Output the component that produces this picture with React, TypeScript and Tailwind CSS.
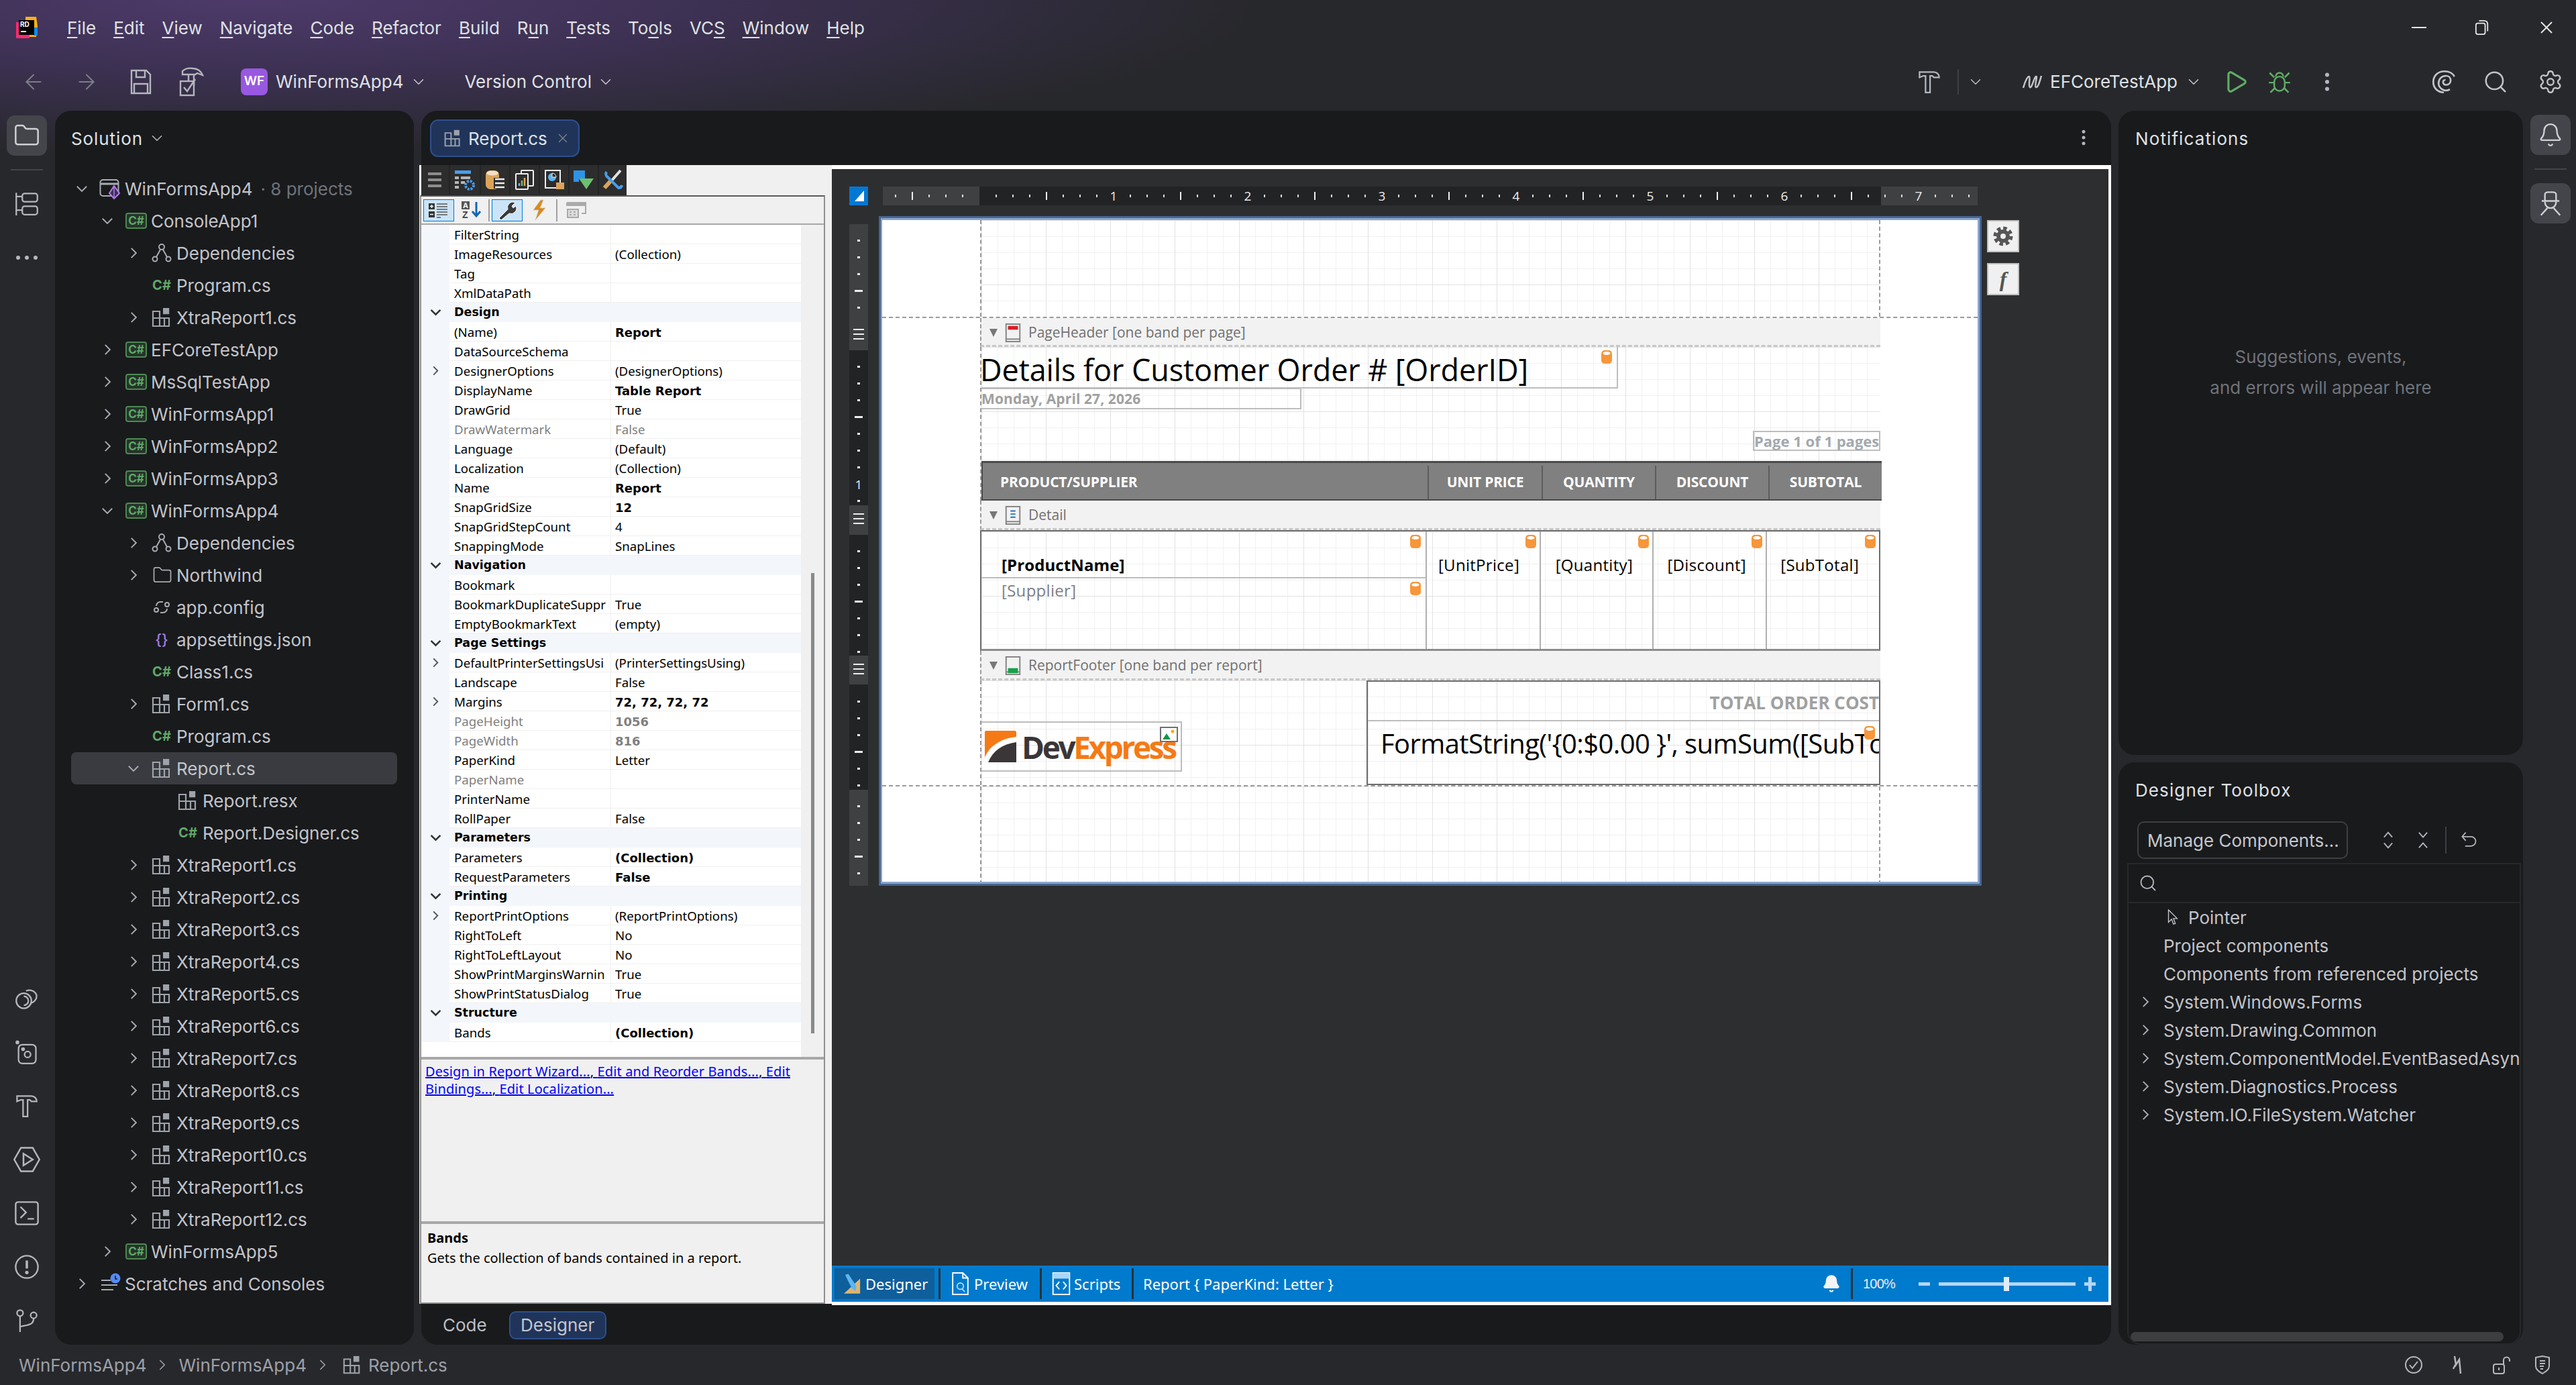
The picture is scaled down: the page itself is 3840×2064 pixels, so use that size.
import {
  ArrowLeft, ArrowRight, Bell, ChevronDown, ChevronRight, EllipsisVertical, Folder, Play, Search, Settings, X,
} from "lucide-react"

const ui = "font-['Inter',sans-serif]"
const tahoma = "font-['Noto_Sans',sans-serif]"
const segoe = "font-['Open_Sans',sans-serif]"

const menus: [string, string, string][] = [
  ["", "F", "ile"], ["", "E", "dit"], ["", "V", "iew"], ["", "N", "avigate"], ["", "C", "ode"], ["", "R", "efactor"],
  ["", "B", "uild"], ["R", "u", "n"], ["", "T", "ests"], ["To", "o", "ls"], ["VC", "S", ""], ["", "W", "indow"], ["", "H", "elp"],
]

function Chev({ open, className = "" }: { open?: boolean; className?: string }) {
  return (
    <svg viewBox="0 0 20 20" className={`w-[26px] h-[26px] ${className}`} fill="none" stroke="#a8abb2" strokeWidth="1.5">
      {open ? <path d="M4.5 7.5l5.5 5.5 5.5-5.5" /> : <path d="M7.5 4.5l5.5 5.5-5.5 5.5" />}
    </svg>
  )
}

function ReportIcon({ className = "w-[32px] h-[32px]" }: { className?: string }) {
  return (
    <svg viewBox="0 0 16 16" className={className} fill="none" stroke="#9ea3ab" strokeWidth="1.1">
      <path d="M1.5 3.5h5v11h-5zM6.5 8.5h7v6h-7zM1.5 8.5h5M10 8.5v6" />
      <rect x="9" y="1" width="4.6" height="4.6" fill="#9ea3ab" stroke="none" />
    </svg>
  )
}

function HammerIcon({ className }: { className: string }) {
  return (
    <svg viewBox="0 0 32 32" className={className} fill="none" stroke="#b4b7bd" strokeWidth="2">
      <path d="M3 3h19c4 0 7 3 7 7h-7l-2-2h-3v22h-6V8H8L3 10z" />
    </svg>
  )
}

function CsBadge() {
  return (
    <span className="w-[32px] h-[24px] rounded-[4px] border-2 border-[#4c8a52] bg-[#25342a] text-[#5fa866] text-[17px] font-bold flex items-center justify-center leading-none">
      C#
    </span>
  )
}

function CsFile() {
  return <span className="w-[32px] text-center text-[#5fa866] text-[20px] font-bold leading-none">C#</span>
}

function SolutionIcon() {
  return (
    <svg viewBox="0 0 32 32" className="w-[32px] h-[32px]" fill="none">
      <rect x="1.5" y="3" width="27" height="24" rx="4" stroke="#a8abb2" strokeWidth="2" />
      <path d="M2 9h26" stroke="#a8abb2" strokeWidth="3" />
      <path d="M22 12l8 11-8 8-7-8z" fill="#3d2f57" stroke="#b07ee8" strokeWidth="2" />
      <path d="M22 14v15" stroke="#b07ee8" strokeWidth="1.5" />
    </svg>
  )
}

function DepsIcon() {
  return (
    <svg viewBox="0 0 32 32" className="w-[32px] h-[32px]" fill="none" stroke="#a8abb2" strokeWidth="2">
      <circle cx="16" cy="7" r="4" />
      <circle cx="6" cy="25" r="3.5" />
      <circle cx="26" cy="25" r="3.5" />
      <path d="M14 11L8 22M18 11l6 11" />
    </svg>
  )
}

function ScratchIcon() {
  return (
    <svg viewBox="0 0 32 32" className="w-[32px] h-[32px]" fill="none">
      <path d="M3 11h14M3 18h24M3 25h18" stroke="#a8abb2" strokeWidth="2" />
      <circle cx="24" cy="8" r="7.5" fill="#548af7" />
      <path d="M24 4v5h3" stroke="#191a1c" strokeWidth="1.5" />
    </svg>
  )
}

function ConfigIcon() {
  return (
    <svg viewBox="0 0 32 32" className="w-[32px] h-[32px]" fill="none" stroke="#a8abb2" strokeWidth="2">
      <path d="M8 14a6 6 0 0 1 6-6h4M24 18a6 6 0 0 1-6 6h-4" />
      <circle cx="8" cy="20" r="3" />
      <circle cx="24" cy="12" r="3" />
    </svg>
  )
}

type TreeRow = { label: string; level: 0 | 1 | 2 | 3; chev?: "open" | "closed"; icon: string; note?: string; sel?: boolean }

const xtra: TreeRow[] = ["1", "2", "3", "4", "5", "6", "7", "8", "9", "10", "11", "12"].map((n) => ({
  label: `XtraReport${n}.cs`, level: 2, chev: "closed", icon: "report",
}))

const tree: TreeRow[] = [
  { label: "WinFormsApp4", level: 0, chev: "open", icon: "sln", note: "· 8 projects" },
  { label: "ConsoleApp1", level: 1, chev: "open", icon: "cs" },
  { label: "Dependencies", level: 2, chev: "closed", icon: "deps" },
  { label: "Program.cs", level: 2, icon: "file" },
  { label: "XtraReport1.cs", level: 2, chev: "closed", icon: "report" },
  { label: "EFCoreTestApp", level: 1, chev: "closed", icon: "cs" },
  { label: "MsSqlTestApp", level: 1, chev: "closed", icon: "cs" },
  { label: "WinFormsApp1", level: 1, chev: "closed", icon: "cs" },
  { label: "WinFormsApp2", level: 1, chev: "closed", icon: "cs" },
  { label: "WinFormsApp3", level: 1, chev: "closed", icon: "cs" },
  { label: "WinFormsApp4", level: 1, chev: "open", icon: "cs" },
  { label: "Dependencies", level: 2, chev: "closed", icon: "deps" },
  { label: "Northwind", level: 2, chev: "closed", icon: "folder" },
  { label: "app.config", level: 2, icon: "config" },
  { label: "appsettings.json", level: 2, icon: "json" },
  { label: "Class1.cs", level: 2, icon: "file" },
  { label: "Form1.cs", level: 2, chev: "closed", icon: "report" },
  { label: "Program.cs", level: 2, icon: "file" },
  { label: "Report.cs", level: 2, chev: "open", icon: "report", sel: true },
  { label: "Report.resx", level: 3, icon: "report" },
  { label: "Report.Designer.cs", level: 3, icon: "file" },
  ...xtra,
  { label: "WinFormsApp5", level: 1, chev: "closed", icon: "cs" },
  { label: "Scratches and Consoles", level: 0, chev: "closed", icon: "scratch" },
]

const levelPad = ["pl-[3px]", "pl-[41px]", "pl-[80px]", "pl-[119px]"]

function TreeIcon({ kind }: { kind: string }) {
  if (kind === "sln") return <SolutionIcon />
  if (kind === "cs") return <CsBadge />
  if (kind === "file") return <CsFile />
  if (kind === "deps") return <DepsIcon />
  if (kind === "folder") return <Folder className="w-[30px] h-[30px]" color="#a8abb2" strokeWidth={1.4} />
  if (kind === "config") return <ConfigIcon />
  if (kind === "scratch") return <ScratchIcon />
  if (kind === "json") return <span className="w-[32px] text-center text-[#a57ee0] text-[22px] font-medium leading-none">{"{}"}</span>
  return <ReportIcon />
}

function ProjectTree() {
  return (
    <div className="pl-[24px] w-[510px]">
      {tree.map((row, i) => (
        <div
          key={i}
          className={`flex items-center h-[48px] whitespace-nowrap rounded-[8px] ${levelPad[row.level]} ${row.sel ? "bg-[#393b40]" : ""}`}
        >
          <span className="w-[26px] flex justify-center">{row.chev && <Chev open={row.chev === "open"} />}</span>
          <span className={`${row.level === 1 ? "w-[52px]" : "w-[51px]"} pr-[6px] flex justify-end`}>
            <TreeIcon kind={row.icon} />
          </span>
          <span className="text-[#c2c4ca]">{row.label}</span>
          {row.note && <span className="ml-[12px] text-[#6f737a]">{row.note}</span>}
        </div>
      ))}
    </div>
  )
}

function LeftStripe() {
  const stroke = "#b4b7bd"
  return (
    <div className="w-[82px] h-full flex flex-col justify-between items-center pb-[6px] pr-[2px]">
      <div className="flex flex-col items-center pt-[7px]">
        <div className="w-[60px] h-[60px] rounded-[12px] bg-[#43454a] flex items-center justify-center">
          <Folder className="w-[40px] h-[40px]" color="#ced0d6" strokeWidth={1.5} />
        </div>
        <div className="w-[48px] h-[2px] bg-[#43454a] my-[20px]" />
        <div className="w-[60px] h-[60px] flex items-center justify-center">
          <svg viewBox="0 0 32 32" className="w-[36px] h-[36px]" fill="none" stroke={stroke} strokeWidth="2">
            <path d="M2 1v30M2 6h8M2 24h8" />
            <rect x="10" y="2" width="20" height="11" rx="3" />
            <rect x="10" y="19" width="20" height="11" rx="3" />
          </svg>
        </div>
        <div className="w-[60px] h-[60px] mt-[20px] flex items-center justify-center gap-[7px]">
          <span className="w-[6px] h-[6px] rounded-full bg-[#b4b7bd]" />
          <span className="w-[6px] h-[6px] rounded-full bg-[#b4b7bd]" />
          <span className="w-[6px] h-[6px] rounded-full bg-[#b4b7bd]" />
        </div>
      </div>
      <div className="flex flex-col gap-[20px]">
        <div className="w-[60px] h-[60px] flex items-center justify-center">
          <svg viewBox="0 0 32 32" className="w-[36px] h-[36px]" fill="none" stroke={stroke} strokeWidth="2">
            <circle cx="12" cy="19" r="10" />
            <path d="M12 13a6 6 0 0 1 0 12" />
            <path d="M15 6a10 10 0 0 1 14 6 10 10 0 0 1-7 10" />
          </svg>
        </div>
        <div className="w-[60px] h-[60px] flex items-center justify-center">
          <svg viewBox="0 0 32 32" className="w-[36px] h-[36px]" fill="none" stroke={stroke} strokeWidth="2">
            <circle cx="3.5" cy="3" r="1.5" fill={stroke} />
            <rect x="5" y="6" width="23" height="25" rx="5" />
            <circle cx="17" cy="19" r="4" />
            <circle cx="11" cy="12" r="1.5" fill={stroke} />
          </svg>
        </div>
        <div className="w-[60px] h-[60px] flex items-center justify-center">
          <HammerIcon className="w-[36px] h-[36px]" />
        </div>
        <div className="w-[60px] h-[60px] flex items-center justify-center">
          <svg viewBox="0 0 32 32" className="w-[40px] h-[40px]" fill="none" stroke={stroke} strokeWidth="2">
            <path d="M9 2h14l8 14-8 14H9L1 16z" />
            <path d="M12 9l11 7-11 7z" />
          </svg>
        </div>
        <div className="w-[60px] h-[60px] flex items-center justify-center">
          <svg viewBox="0 0 32 32" className="w-[38px] h-[38px]" fill="none" stroke={stroke} strokeWidth="2">
            <rect x="2" y="2" width="28" height="28" rx="3" />
            <path d="M8 8l7 7-7 7M17 23h8" />
          </svg>
        </div>
        <div className="w-[60px] h-[60px] flex items-center justify-center">
          <svg viewBox="0 0 32 32" className="w-[38px] h-[38px]" fill="none" stroke={stroke} strokeWidth="2">
            <circle cx="16" cy="16" r="14" />
            <path d="M16 8v10" strokeWidth="3" />
            <circle cx="16" cy="23" r="1.2" fill={stroke} />
          </svg>
        </div>
        <div className="w-[60px] h-[60px] flex items-center justify-center">
          <svg viewBox="0 0 32 32" className="w-[36px] h-[36px]" fill="none" stroke={stroke} strokeWidth="2">
            <circle cx="7" cy="6" r="4" />
            <circle cx="25" cy="9" r="4" />
            <path d="M7 10v21M25 13c0 8-6 9-18 11" />
          </svg>
        </div>
      </div>
    </div>
  )
}

type Prop = { n: string; v?: string; b?: boolean; dim?: boolean; exp?: boolean; cat?: boolean }

const props: Prop[] = [
  { n: "FilterString" },
  { n: "ImageResources", v: "(Collection)" },
  { n: "Tag" },
  { n: "XmlDataPath" },
  { n: "Design", cat: true },
  { n: "(Name)", v: "Report", b: true },
  { n: "DataSourceSchema" },
  { n: "DesignerOptions", v: "(DesignerOptions)", exp: true },
  { n: "DisplayName", v: "Table Report", b: true },
  { n: "DrawGrid", v: "True" },
  { n: "DrawWatermark", v: "False", dim: true },
  { n: "Language", v: "(Default)" },
  { n: "Localization", v: "(Collection)" },
  { n: "Name", v: "Report", b: true },
  { n: "SnapGridSize", v: "12", b: true },
  { n: "SnapGridStepCount", v: "4" },
  { n: "SnappingMode", v: "SnapLines" },
  { n: "Navigation", cat: true },
  { n: "Bookmark" },
  { n: "BookmarkDuplicateSuppr", v: "True" },
  { n: "EmptyBookmarkText", v: "(empty)" },
  { n: "Page Settings", cat: true },
  { n: "DefaultPrinterSettingsUsi", v: "(PrinterSettingsUsing)", exp: true },
  { n: "Landscape", v: "False" },
  { n: "Margins", v: "72, 72, 72, 72", b: true, exp: true },
  { n: "PageHeight", v: "1056", b: true, dim: true },
  { n: "PageWidth", v: "816", b: true, dim: true },
  { n: "PaperKind", v: "Letter" },
  { n: "PaperName", dim: true },
  { n: "PrinterName" },
  { n: "RollPaper", v: "False" },
  { n: "Parameters", cat: true },
  { n: "Parameters", v: "(Collection)", b: true },
  { n: "RequestParameters", v: "False", b: true },
  { n: "Printing", cat: true },
  { n: "ReportPrintOptions", v: "(ReportPrintOptions)", exp: true },
  { n: "RightToLeft", v: "No" },
  { n: "RightToLeftLayout", v: "No" },
  { n: "ShowPrintMarginsWarnin", v: "True" },
  { n: "ShowPrintStatusDialog", v: "True" },
  { n: "Structure", cat: true },
  { n: "Bands", v: "(Collection)", b: true },
]

function PropertyRow({ p }: { p: Prop }) {
  if (p.cat) {
    return (
      <div className="flex h-[29px] bg-[#f3f6fb] items-center">
        <span className="w-[42px] flex justify-center">
          <svg viewBox="0 0 16 10" className="w-[17px] h-[11px]" fill="none" stroke="#333" strokeWidth="2.4">
            <path d="M1.5 1.5L8 8l6.5-6.5" />
          </svg>
        </span>
        <span className="pl-[7px] font-['DejaVu_Sans',sans-serif] font-bold text-[17.5px] text-black">{p.n}</span>
      </div>
    )
  }
  const color = p.dim ? "text-[#808080]" : "text-black"
  return (
    <div className="flex h-[29px] bg-[#f3f6fb]">
      <span className="w-[42px] flex items-center justify-center">
        {p.exp && (
          <svg viewBox="0 0 10 16" className="w-[11px] h-[15px]" fill="none" stroke="#555" strokeWidth="2">
            <path d="M1.5 1.5L8 8l-6.5 6.5" />
          </svg>
        )}
      </span>
      <div className="w-[241px] bg-white border-b border-[#f0f0f0] border-r pl-[7px] overflow-hidden whitespace-nowrap leading-[29px]">
        <span className={color}>{p.n}</span>
      </div>
      <div
        className={`w-[283px] border-b border-[#f0f0f0] pl-[6px] overflow-hidden whitespace-nowrap leading-[29px] bg-white ${color}`}
      >
        {p.b ? <span className="font-['DejaVu_Sans',sans-serif] font-bold text-[18px]">{p.v}</span> : p.v}
      </div>
    </div>
  )
}

function TabIcon({ i }: { i: number }) {
  const base = "w-[32px] h-[32px]"
  if (i === 0)
    return (
      <svg viewBox="0 0 32 32" className={base} fill="#8d8d8d">
        <rect x="5" y="5" width="20" height="4" />
        <rect x="5" y="14" width="20" height="4" />
        <rect x="5" y="23" width="20" height="4" />
      </svg>
    )
  if (i === 1)
    return (
      <svg viewBox="0 0 32 32" className={base}>
        <rect x="1" y="2" width="24" height="5" fill="#4a9eea" />
        <path d="M1 11h6v4H1zM10 11h14v4H10zM1 18h6v4H1zM10 18h6v4h-6zM1 25h6v4H1z" fill="#b6b6b6" />
        <circle cx="23" cy="24" r="6" fill="none" stroke="#4a9eea" strokeWidth="4" strokeDasharray="3 1.7" />
      </svg>
    )
  if (i === 2)
    return (
      <svg viewBox="0 0 32 32" className={base}>
        <rect x="2" y="2" width="20" height="28" rx="7" fill="#dba35a" />
        <ellipse cx="12" cy="6" rx="9" ry="3.5" fill="#f2e0c2" />
        <rect x="14" y="13" width="17" height="16" fill="#2d2d2d" />
        <path d="M16 15h14M16 21h14M16 27h14" stroke="#eee" strokeWidth="2.5" />
      </svg>
    )
  if (i === 3)
    return (
      <svg viewBox="0 0 32 32" className={base} fill="none" stroke="#eee" strokeWidth="2">
        <rect x="11" y="2" width="18" height="23" rx="1" />
        <rect x="3" y="7" width="18" height="23" rx="1" fill="#2d2d2d" />
        <path d="M8 25v-4" stroke="#5db5f0" strokeWidth="2.5" />
        <path d="M12 25v-8" stroke="#6cbf6c" strokeWidth="2.5" />
        <path d="M16 25V13" stroke="#e5a84f" strokeWidth="2.5" />
      </svg>
    )
  if (i === 4)
    return (
      <svg viewBox="0 0 32 32" className={base}>
        <rect x="3" y="2" width="22" height="26" fill="#2d2d2d" stroke="#eee" strokeWidth="2" />
        <circle cx="13" cy="12" r="6" fill="#5db5f0" />
        <path d="M13 12V6a6 6 0 0 1 6 6z" fill="#2d2d2d" stroke="#eee" />
        <rect x="19" y="20" width="12" height="10" fill="#dba35a" />
      </svg>
    )
  if (i === 5)
    return (
      <svg viewBox="0 0 32 32" className={base}>
        <path d="M1 2h17v12H9v5H1z" fill="#2f93e8" />
        <path d="M9 14h22L20 30z" fill="#6cc06f" />
      </svg>
    )
  return (
    <svg viewBox="0 0 32 32" className={base} fill="none" strokeWidth="4">
      <path d="M27 2L6 26" stroke="#e2e2e2" />
      <path d="M12 18L3 28" stroke="#dba35a" strokeWidth="6" />
      <path d="M6 4a6 6 0 0 0 2 8l16 16a5 5 0 0 0 5-4" stroke="#4a9eea" />
    </svg>
  )
}

const tabWidths = ["w-[41px]", "w-[44px]", "w-[42px]", "w-[42px]", "w-[42px]", "w-[42px]", "w-[41px]"]

function PropertyPane() {
  return (
    <div className={`w-[615px] shrink-0 h-[1697px] flex flex-col bg-[#f0f0f0] ${tahoma} text-[18.7px]`}>
      <div className="h-[45px] flex border-l-[3px] border-white">
        <div className="flex gap-[2px] bg-[#232426]">
          {tabWidths.map((w, i) => (
            <div key={i} className={`${w} bg-[#2d2d2d] flex items-center justify-center h-[44px]`}>
              <TabIcon i={i} />
            </div>
          ))}
        </div>
      </div>
      <div className="flex-1 ml-[1px] mr-[10px] flex flex-col border-x-2 border-t-2 border-b-2 border-[#8f8f8f] border-t-[#5a5a5a] min-h-0">
        <div className="h-[42px] flex items-center pl-[3px] border-b-2 border-[#a8a8a8]">
          <span className="w-[46px] h-[33px] border border-[#0078d4] bg-[#cce4f7] flex items-center justify-center">
            <svg viewBox="0 0 32 24" className="w-[32px] h-[24px]">
              <path d="M1 2h9v9H1zM1 14h9v9H1z" fill="#333" />
              <path d="M3 6.5h5M5.5 4v5M3 18.5h5" stroke="#fff" strokeWidth="1.5" />
              <path d="M13 3h16M13 7h16M13 11h16M13 15h16M13 19h16M13 23h6" stroke="#555" strokeWidth="1.5" />
            </svg>
          </span>
          <span className="w-[46px] h-[33px] ml-[2px] flex items-center justify-center">
            <svg viewBox="0 0 32 28" className="w-[32px] h-[28px]">
              <rect x="2" y="1" width="12" height="12" fill="#555" />
              <text x="4" y="11" fontSize="11" fontWeight="700" fill="#fff" fontFamily="Liberation Sans">A</text>
              <text x="3" y="26" fontSize="14" fontWeight="700" fill="#444" fontFamily="Liberation Sans">Z</text>
              <path d="M24 2v20M18 16l6 7 6-7" stroke="#1666b0" strokeWidth="3" fill="none" />
            </svg>
          </span>
          <span className="w-[2px] h-[33px] bg-[#a0a0a0] ml-[3px]" />
          <span className="w-[46px] h-[33px] ml-[3px] border border-[#0078d4] bg-[#cce4f7] flex items-center justify-center">
            <svg viewBox="0 0 32 32" className="w-[32px] h-[32px]">
              <path d="M4 28l13-13a8 8 0 0 1 11-10l-5 5 2 3 4-3a8 8 0 0 1-10 11L7 31z" fill="#3a3a3a" stroke="#fff" />
            </svg>
          </span>
          <span className="w-[46px] h-[33px] ml-[2px] flex items-center justify-center">
            <svg viewBox="0 0 24 32" className="w-[24px] h-[32px]">
              <path d="M14 1L3 16h8L6 31l15-18h-8l5-12z" fill="#d98a1a" stroke="#c9c9c9" strokeWidth="0.8" />
            </svg>
          </span>
          <span className="w-[2px] h-[33px] bg-[#a0a0a0] ml-[2px]" />
          <span className="w-[46px] h-[33px] ml-[5px] flex items-center justify-center">
            <svg viewBox="0 0 30 24" className="w-[30px] h-[24px]" fill="none" stroke="#aaa" strokeWidth="2">
              <path d="M1 1h28v16h-6" />
              <rect x="0" y="1" width="29" height="5" fill="#aaa" stroke="none" />
              <rect x="2" y="11" width="16" height="12" fill="#ddd" />
              <path d="M5 15h3M11 15h3M5 19h3M11 19h3" />
            </svg>
          </span>
        </div>
        <div className="h-[1240px] flex bg-white overflow-hidden relative">
          <div className="w-[566px] shrink-0">
            {props.map((p, i) => (
              <PropertyRow key={i} p={p} />
            ))}
          </div>
          <div className="flex-1 bg-[#f0f0f0] relative">
            <span className="absolute left-[15px] top-[519px] bottom-[35px] w-[5px] bg-[#8a8a8a]" />
          </div>
        </div>
        <div className="h-[4px] border-t-2 border-[#a8a8a8] border-b-2" />
        <div className="h-[241px] pl-[6px] pt-[5px] text-[20px] text-[#0000ff] underline leading-[26px] tracking-[0.12px]">
          <span>Design in Report Wizard...</span><span className="text-black">, </span>
          <span>Edit and Reorder Bands...</span><span className="text-black">, </span>
          <span>Edit</span>
          <br />
          <span>Bindings...</span><span className="text-black">, </span>
          <span>Edit Localization...</span>
        </div>
        <div className="h-[4px] border-t-2 border-b-2 border-[#a8a8a8]" />
        <div className="flex-1 pl-[9px] pt-[6px] text-[20px] text-black leading-[30px]">
          <div className="font-bold">Bands</div>
          <div>Gets the collection of bands contained in a report.</div>
        </div>
      </div>
    </div>
  )
}

const rulerTicks = Array.from({ length: 65 }, (_, i) => i - 5).filter((k) => k !== 0)

function HRuler() {
  return (
    <svg width="1632" height="28" className="block">
      <rect width="1632" height="28" fill="#222325" />
      <rect width="144" height="28" fill="#3f4042" />
      <rect x="1488" width="144" height="28" fill="#3f4042" />
      {rulerTicks.map((k) => {
        const x = 144 + k * 25
        if (k > 0 && k % 8 === 0)
          return (
            <text key={k} x={x} y="21" textAnchor="middle" fontSize="19" fill="#eee" fontFamily="Open Sans">
              {k / 8}
            </text>
          )
        if (k % 4 === 0) return <rect key={k} x={x - 1} y="8" width="2" height="12" fill="#eee" />
        return <rect key={k} x={x - 1} y="12" width="2" height="4" fill="#ddd" />
      })}
    </svg>
  )
}

const vDots = [358, 383, 408, 458, 546, 571, 596, 646, 671, 696, 746, 821, 846, 871, 921, 946, 971, 1045, 1070, 1095, 1145, 1170, 1201, 1226, 1251, 1301]
const vLong = [433, 621, 896, 1120, 1276]
const vHandles = [500, 775, 999]

function VRuler() {
  return (
    <svg width="28" height="986" className="block">
      <rect width="28" height="986" fill="#222325" />
      <rect width="28" height="188" fill="#3f4042" />
      <rect y="419" width="28" height="44" fill="#3f4042" />
      <rect y="643" width="28" height="43" fill="#3f4042" />
      <rect y="843" width="28" height="143" fill="#3f4042" />
      {vDots.map((y) => (
        <rect key={y} x="12" y={y - 335} width="4" height="3" fill="#eee" />
      ))}
      {vLong.map((y) => (
        <rect key={y} x="8" y={y - 335} width="12" height="3" fill="#eee" />
      ))}
      {vHandles.map((y) => (
        <path key={y} d={`M6 ${y - 343}h16M6 ${y - 336}h16M6 ${y - 329}h16`} stroke="#eee" strokeWidth="2" />
      ))}
      <text x="14" y="395" textAnchor="middle" fontSize="19" fill="#eee" fontFamily="Open Sans">
        1
      </text>
    </svg>
  )
}

const gridBg =
  "bg-[linear-gradient(to_right,#e2e2e2_1px,transparent_1px),linear-gradient(to_bottom,#e2e2e2_1px,transparent_1px),linear-gradient(to_right,#f1f1f1_1px,transparent_1px),linear-gradient(to_bottom,#f1f1f1_1px,transparent_1px)] bg-[size:96px_96px,96px_96px,24px_24px,24px_24px]"

function Db({ className }: { className: string }) {
  return (
    <svg viewBox="0 0 16 20" className={`absolute w-[16px] h-[20px] ${className}`}>
      <rect width="16" height="20" rx="5" fill="#f7963a" />
      <ellipse cx="8" cy="4.5" rx="5.5" ry="2.5" fill="#fff" />
    </svg>
  )
}

function BandStrip({ title, icon, className }: { title: string; icon: "head" | "detail" | "foot"; className: string }) {
  return (
    <div className={`flex ${className}`}>
      <div className="w-[146px]" />
      <div className="w-[1342px] bg-[#f2f2f2] border-l-2 border-dashed border-[#9a9a9a] border-b-[3px] border-b-[#c8c8c8] border-b-solid pt-[3px] flex items-center pl-[12px]">
        <span className="border-x-[6px] border-x-transparent border-t-[12px] border-t-[#777] mr-[11px]" />
        <svg viewBox="0 0 24 30" className="w-[24px] h-[28px] mr-[11px]" fill="none">
          <rect x="1" y="1" width="22" height="28" stroke="#808080" strokeWidth="2" />
          <path d="M1 25h22" stroke="#808080" strokeWidth="2" />
          {icon === "head" && <rect x="4" y="4" width="16" height="6" fill="#d81e26" />}
          {icon === "detail" && <path d="M8 8h8M8 13h8M8 18h8" stroke="#2a6fbe" strokeWidth="2" />}
          {icon === "foot" && <rect x="4" y="19" width="16" height="8" fill="#18a04a" />}
        </svg>
        <span className={`${segoe} text-[21px] text-[#707070]`}>{title}</span>
      </div>
      <div className="flex-1" />
    </div>
  )
}

function DashedCell({ className = "" }: { className?: string }) {
  return <div className={`w-[1342px] border-x-2 border-dashed border-[#9a9a9a] ${gridBg} ${className}`} />
}

function ReportPage() {
  const heads = [["UNIT PRICE", "w-[170px]"], ["QUANTITY", "w-[169px]"], ["DISCOUNT", "w-[169px]"], ["SUBTOTAL", "w-[167px]"]]
  const cells = [
    ["[UnitPrice]", "w-[170px] pl-[17px]"],
    ["[Quantity]", "w-[169px] pl-[22px]"],
    ["[Discount]", "w-[169px] pl-[20px]"],
    ["[SubTotal]", "w-[167px] pl-[20px]"],
  ]
  return (
    <div className="w-[1644px] h-[998px] border-[3px] border-[#47658f] shrink-0">
      <div className="w-full h-full border-[3px] border-[#8aa6cd] border-l-[2px] bg-white flex flex-col overflow-hidden">
        <div className="h-[144px] flex shrink-0">
          <div className="w-[146px]" />
          <DashedCell />
        </div>
        <div className="border-t-2 border-dashed border-[#9a9a9a]" />
        <BandStrip title="PageHeader [one band per page]" icon="head" className="h-[43px] shrink-0" />
        {/* page header band */}
        <div className="flex h-[229px] shrink-0">
          <div className="w-[146px]" />
          <div className={`w-[1342px] relative ${gridBg} border-l-2 border-dashed border-[#9a9a9a]`}>
            <div className="absolute left-0 top-0 w-[949px] h-[62px] border-2 border-t-0 border-l-0 border-[#bdbdbd]">
              <span className={`${segoe} absolute left-[-2px] top-[3px] text-[45px] leading-[62px] tracking-[-0.1px] whitespace-nowrap text-black`}>
                Details for Customer Order # [OrderID]
              </span>
              <Db className="right-[7px] top-[5px]" />
            </div>
            <div className="absolute left-0 top-[61px] w-[477px] h-[32px] border-2 border-l-0 border-[#bdbdbd]">
              <span className={`${segoe} font-bold text-[21px] leading-[28px] tracking-[0.1px] text-[#a0a0a0] whitespace-nowrap block`}>
                Monday, April 27, 2026
              </span>
            </div>
            <div className="absolute right-0 top-[125px] w-[190px] h-[30px] border-2 border-[#bdbdbd] text-right">
              <span className={`${segoe} font-bold text-[22px] leading-[26px] text-[#a2a9ae] whitespace-nowrap block`}>
                Page 1 of 1 pages
              </span>
            </div>
            <div className={`absolute left-0 top-[170px] w-[1342px] h-[59px] bg-[#808080] border-t-[3px] border-b-[2px] border-[#4a4a4a] border-l-2 pt-[4px] flex text-white ${segoe} font-bold text-[21px] tracking-[-0.2px]`}>
              <div className="w-[665px] pl-[26px] flex items-center border-r-2 border-[#5c5c5c]">PRODUCT/SUPPLIER</div>
              {heads.map(([t, w], i) => (
                <div key={t} className={`${w} flex items-center justify-center ${i < 3 ? "border-r-2 border-[#5c5c5c]" : ""}`}>
                  {t}
                </div>
              ))}
            </div>
          </div>
          <div className="flex-1" />
        </div>
        <BandStrip title="Detail" icon="detail" className="h-[44px] shrink-0" />
        {/* detail band */}
        <div className="flex h-[180px] shrink-0">
          <div className="w-[146px]" />
          <div className={`w-[1342px] flex border-2 border-[#6e6e6e] border-b-[3px] border-b-[#8c8c8c] relative ${gridBg} ${segoe} text-[24px] tracking-[0.3px] text-black`}>
            <div className="w-[665px] border-r-2 border-[#b0b0b0] flex flex-col relative">
              <div className="h-[70px] border-b-2 border-[#bdbdbd] pl-[30px] pt-[33px] font-bold leading-[34px] tracking-[0.1px]">[ProductName]</div>
              <div className="pl-[30px] text-[#808080] leading-[36px]">[Supplier]</div>
              <Db className="right-[7px] top-[5px]" />
              <Db className="right-[7px] top-[75px]" />
            </div>
            {cells.map(([t, w], i) => (
              <div key={t} className={`${w} relative pt-[33px] leading-[34px] ${i < 3 ? "border-r-2 border-[#b0b0b0]" : ""}`}>
                {t}
                <Db className="right-[5px] top-[5px]" />
              </div>
            ))}
          </div>
          <div className="flex-1" />
        </div>
        <BandStrip title="ReportFooter [one band per report]" icon="foot" className="h-[44px] shrink-0" />
        {/* report footer band */}
        <div className="flex h-[156px] shrink-0">
          <div className="w-[146px]" />
          <div className={`w-[1342px] relative ${gridBg} border-l-2 border-dashed border-[#9a9a9a]`}>
            <div className="absolute left-0 top-[61px] w-[299px] h-[75px] border-2 border-l-0 border-[#bdbdbd] flex items-center">
              <svg viewBox="0 0 47 47" className="w-[47px] h-[47px] ml-[5px] mr-[8px] shrink-0">
                <rect width="47" height="47" rx="2" fill="#f57a16" />
                <path d="M0 47V40C6 24 22 12 47 9V47z" fill="#fff" />
                <path d="M5 47C12 30 26 20 47 17V47z" fill="#3a3638" />
              </svg>
              <span className={`${segoe} font-bold text-[46px] leading-[50px] tracking-[-3.4px] whitespace-nowrap`}>
                <span className="text-[#3a3638]">Dev</span>
                <span className="text-[#f57a16]">Express</span>
              </span>
              <svg viewBox="0 0 27 23" className="absolute right-[4px] top-[6px] w-[27px] h-[23px]">
                <rect x="1" y="1" width="25" height="21" fill="#fff" stroke="#707070" strokeWidth="2" />
                <path d="M4 19l6-9 6 9z" fill="#149447" />
                <circle cx="19" cy="7" r="2.5" fill="#f2ae1a" />
              </svg>
            </div>
            <div className="absolute left-[574px] top-0 w-[766px] h-[156px] border-2 border-[#6e6e6e] overflow-hidden">
              <div className={`h-[59px] border-b-2 border-[#bdbdbd] text-right ${segoe} font-bold text-[26px] leading-[62px] text-[#a0a0a0] whitespace-nowrap`}>
                TOTAL ORDER COST
              </div>
              <span className={`${segoe} absolute left-[19px] top-[67px] text-[40px] leading-[50px] tracking-[-0.6px] text-black whitespace-nowrap`}>
                FormatString('{"{"}0:$0.00 {"}"}', sumSum([SubTotal]))
              </span>
              <Db className="right-[6px] top-[66px]" />
            </div>
          </div>
          <div className="flex-1" />
        </div>
        <div className="border-t-2 border-dashed border-[#9a9a9a]" />
        <div className="flex-1 flex min-h-0">
          <div className="w-[146px]" />
          <DashedCell className="h-[146px]" />
        </div>
      </div>
    </div>
  )
}

function DesignerStatus() {
  const sep = <span className="w-[3px] h-[46px] bg-[#26323c] mx-[6px] shrink-0" />
  return (
    <div className={`h-[54px] bg-[#007acc] flex items-center pl-[4px] pr-[19px] text-white text-[22px] ${tahoma}`}>
      <div className="h-[46px] w-[149px] bg-[#0e5f9b] flex items-center pl-[14px] gap-[6px]">
        <svg viewBox="0 0 28 32" className="w-[26px] h-[30px]">
          <path d="M26 8v24H0z" fill="#dfb56f" />
          <path d="M2 2l5-2 13 20-1 8-6-4z" fill="#5db5f0" />
        </svg>
        <span>Designer</span>
      </div>
      {sep}
      <div className="flex items-center gap-[8px] pl-[11px] w-[136px]">
        <svg viewBox="0 0 26 36" className="w-[25px] h-[34px]" fill="none" stroke="#fff" strokeWidth="2">
          <path d="M1 1h16l8 8v26H1zM17 1v8h8" />
          <circle cx="13" cy="22" r="5" stroke="#a9d6fa" />
          <path d="M16 26l4 5" stroke="#a9d6fa" />
        </svg>
        <span>Preview</span>
      </div>
      {sep}
      <div className="flex items-center gap-[5px] pl-[9px] w-[122px]">
        <svg viewBox="0 0 28 36" className="w-[28px] h-[34px]" fill="none" stroke="#fff" strokeWidth="2">
          <rect x="1" y="1" width="26" height="34" />
          <rect x="1" y="1" width="26" height="9" fill="#a9d6fa" stroke="none" />
          <path d="M11 15l-5 6 5 6M17 15l5 6-5 6" />
        </svg>
        <span>Scripts</span>
      </div>
      {sep}
      <span className="ml-[8px]">Report {"{"} PaperKind: Letter {"}"}</span>
      <span className="flex-1" />
      <Bell className="w-[28px] h-[30px]" color="#f4f4f4" fill="#f4f4f4" />
      <span className="ml-[15px] w-[3px] h-[46px] bg-[#26323c]" />
      <span className="ml-[15px] w-[62px] text-[20px] tracking-[-0.8px] font-['Liberation_Sans',sans-serif] text-[#eee]">100%</span>
      <span className="ml-[21px] w-[17px] h-[5px] bg-[#b5d7f3]" />
      <div className="ml-[13px] w-[204px] h-[5px] bg-[#b5d7f3] relative">
        <span className="absolute left-[97px] top-[-8px] w-[8px] h-[21px] bg-[#dcecf9]" />
      </div>
      <svg viewBox="0 0 17 21" className="ml-[13px] w-[17px] h-[21px]" fill="#b5d7f3">
        <rect y="8" width="17" height="5" />
        <rect x="6" width="5" height="21" />
      </svg>
    </div>
  )
}

function EditorPanel() {
  return (
    <div className="w-[2519px] h-full bg-[#191a1c] rounded-[24px] flex flex-col">
      <div className="h-[81px] flex items-start pt-[13px] pl-[13px] pr-[26px] justify-between">
        <div className="h-[56px] w-[223px] rounded-[12px] bg-[#20345a] border-2 border-[#2d4f8c] flex items-center pl-[18px] text-[#dfe1e5]">
          <ReportIcon className="w-[28px] h-[28px]" />
          <span className="ml-[9px]">Report.cs</span>
          <X className="ml-[12px] w-[22px] h-[22px]" color="#7e8289" strokeWidth={1.5} />
        </div>
        <EllipsisVertical className="mt-[12px] w-[30px] h-[30px]" color="#b4b7bd" strokeWidth={2} />
      </div>
      <div className="h-[1699px] -ml-[3px] flex">
        <PropertyPane />
        <div className="flex-1 bg-white pt-[6px] pr-[4px] pb-[5px]">
          <div className="h-full bg-[#2d2e30] flex flex-col">
            <div className="flex-1 pt-[26px] pl-[26px] flex flex-col">
              <div className="flex items-center">
                <div className="w-[28px] h-[28px] bg-[#0078d4] flex items-center justify-center">
                  <svg viewBox="0 0 28 28" className="w-[28px] h-[28px]">
                    <path d="M22 6v16H8z" fill="#fff" />
                  </svg>
                </div>
                <div className="ml-[22px]">
                  <HRuler />
                </div>
              </div>
              <div className="flex mt-[16px]">
                <div className="mt-[12px] w-[28px]">
                  <VRuler />
                </div>
                <div className="ml-[16px]">
                  <ReportPage />
                </div>
                <div className="ml-[8px] mt-[6px] flex flex-col gap-[16px]">
                  <div className="w-[48px] h-[48px] bg-[#f0f0f0] border-2 border-[#c0c0c0] flex items-center justify-center">
                    <svg viewBox="0 0 30 30" className="w-[30px] h-[30px]" fill="none" stroke="#555">
                      <circle cx="15" cy="15" r="7" strokeWidth="6" />
                      <circle cx="15" cy="15" r="12" strokeWidth="5" strokeDasharray="5.4 4" />
                    </svg>
                  </div>
                  <div className="w-[48px] h-[48px] bg-[#f0f0f0] border-2 border-[#c0c0c0] flex items-center justify-center font-['Liberation_Serif',serif] italic font-bold text-[32px] text-[#555]">
                    f
                  </div>
                </div>
              </div>
            </div>
            <DesignerStatus />
          </div>
        </div>
      </div>
      <div className="flex-1 flex items-center pl-[32px]">
        <span className="text-[#bcbec4]">Code</span>
        <span className="ml-[33px] h-[42px] w-[145px] rounded-[10px] bg-[#20345a] border-2 border-[#2d4f8c] flex items-center justify-center text-[#c4c7cd]">
          Designer
        </span>
      </div>
    </div>
  )
}

const toolboxRows = [
  { t: "Project components" },
  { t: "Components from referenced projects" },
  { t: "System.Windows.Forms", c: true },
  { t: "System.Drawing.Common", c: true },
  { t: "System.ComponentModel.EventBasedAsync", c: true },
  { t: "System.Diagnostics.Process", c: true },
  { t: "System.IO.FileSystem.Watcher", c: true },
]

function ToolboxPanel() {
  return (
    <div className="h-[868px] bg-[#191a1c] rounded-[24px] flex flex-col">
      <div className="h-[82px] flex items-center pl-[25px] text-[#dfe1e5] tracking-[1.1px]">Designer Toolbox</div>
      <div className="h-[56px] mt-[6px] flex items-center pl-[28px]">
        <div className="w-[314px] h-[56px] border-2 border-[#3c3f44] rounded-[10px] flex items-center pl-[13px] text-[#c4c7cd]">
          Manage Components...
        </div>
        <svg viewBox="0 0 20 32" className="ml-[50px] w-[20px] h-[28px]" fill="none" stroke="#b4b7bd" strokeWidth="2">
          <path d="M3 11l7-8 7 8M3 21l7 8 7-8" />
        </svg>
        <svg viewBox="0 0 20 32" className="ml-[32px] w-[20px] h-[28px]" fill="none" stroke="#b4b7bd" strokeWidth="2">
          <path d="M3 3l7 8 7-8M3 29l7-8 7 8" />
        </svg>
        <span className="ml-[23px] w-[2px] h-[40px] bg-[#3c3f44]" />
        <svg viewBox="0 0 28 32" className="ml-[19px] w-[28px] h-[28px]" fill="none" stroke="#b4b7bd" strokeWidth="2">
          <path d="M9 3L3 10l6 7M3 10h15a7 7 0 0 1 0 16H8" />
        </svg>
      </div>
      <div className="mt-[6px] ml-[13px] w-[587px] flex-1 border-x-2 border-b-2 border-t-2 border-[#26282b] rounded-b-[20px] flex flex-col overflow-hidden">
        <div className="h-[58px] shrink-0 border-b-2 border-[#26282b] flex items-center pl-[15px]">
          <Search className="w-[28px] h-[28px]" color="#b4b7bd" strokeWidth={1.6} />
        </div>
        <div className="flex-1 relative text-[#c2c4ca]">
          <div className="h-[42px] flex items-center pl-[58px]">
            <svg viewBox="0 0 16 26" className="w-[16px] h-[24px]" fill="none" stroke="#c2c4ca" strokeWidth="1.5">
              <path d="M1 1v20l5-5 3 8 3-1-3-8h6z" />
            </svg>
            <span className="ml-[15px]">Pointer</span>
          </div>
          {toolboxRows.map((r) => (
            <div key={r.t} className="h-[42px] flex items-center whitespace-nowrap">
              <span className="w-[52px] shrink-0 flex justify-center pr-[3px]">
                {r.c && <Chev className="w-[24px] h-[24px]" />}
              </span>
              {r.t}
            </div>
          ))}
          <span className="absolute left-[3px] right-[24px] bottom-[3px] h-[14px] rounded-[7px] bg-[#3d3e40]" />
        </div>
      </div>
    </div>
  )
}

export default function App() {
  return (
    <div
      className={`${ui} relative w-[3840px] h-[2064px] overflow-hidden flex flex-col text-[26px] text-[#dfe1e5] bg-[#27282c] bg-[radial-gradient(ellipse_1500px_230px_at_380px_0px,#4d3a6a_0%,#3d3153_45%,#27282c_100%)]`}
    >
      {/* title bar */}
      <div className="h-[82px] flex items-center pl-[24px] shrink-0">
        <svg viewBox="0 0 32 32" className="w-[32px] h-[32px]">
          <path d="M14 0h16l2 14-2 16H14z" fill="#fcb018" />
          <path d="M0 8h6v24H0z" fill="#fc2b6f" />
          <rect x="26" y="16" width="6" height="12" fill="#1688e8" />
          <rect x="4" y="26" width="16" height="6" fill="#fc2b6f" />
          <rect x="4" y="5" width="23" height="22" fill="#000" />
          <text x="6" y="15" fontSize="10" fontWeight="700" fill="#fff" fontFamily="Inter">RD</text>
          <rect x="7" y="21" width="8" height="2" fill="#fff" />
        </svg>
        <div className="ml-[44px] flex gap-[26px] text-[#dfe1e5]">
          {menus.map(([a, b, c]) => (
            <span key={a + b + c}>
              {a}
              <span className="underline underline-offset-[4px]">{b}</span>
              {c}
            </span>
          ))}
        </div>
        <div className="flex-1" />
        <span className="w-[22px] h-[2px] bg-[#e6e6e6]" />
        <svg viewBox="0 0 24 28" className="ml-[72px] w-[22px] h-[26px]" fill="none" stroke="#e6e6e6" strokeWidth="2">
          <rect x="2" y="7" width="15" height="18" rx="3" />
          <path d="M7 3h8c4 0 6 2 6 6v11" />
        </svg>
        <X className="ml-[70px] mr-[29px] w-[30px] h-[30px]" color="#e6e6e6" strokeWidth={1.5} />
      </div>
      {/* tool bar */}
      <div className="h-[83px] flex items-center shrink-0 pb-[4px] text-[#dfe1e5]">
        <ArrowLeft className="ml-[32px] w-[36px] h-[36px]" color="#7c7f86" strokeWidth={1.4} />
        <ArrowRight className="ml-[43px] w-[36px] h-[36px]" color="#7c7f86" strokeWidth={1.4} />
        <svg viewBox="0 0 32 38" className="ml-[47px] w-[32px] h-[38px]" fill="none" stroke="#b4b7bd" strokeWidth="2.4">
          <path d="M2 2h22l6 6v28H2z" />
          <path d="M9 2v10h13V2M6 36V22h20v14" />
        </svg>
        <svg viewBox="0 0 38 44" className="ml-[41px] w-[38px] h-[44px]" fill="none" stroke="#b4b7bd" strokeWidth="2.4">
          <path d="M5 6c4-4 10-5 16-4 6 0 12 4 14 10l-8-3-3 2H5z" />
          <path d="M14 12v8M22 12v16" />
          <rect x="2" y="21" width="20" height="21" />
          <path d="M7 30l5 6 12-18" />
        </svg>
        <span className="ml-[54px] w-[40px] h-[40px] rounded-[8px] bg-[#9858e0] flex items-center justify-center text-white text-[19px] font-semibold">
          WF
        </span>
        <span className="ml-[12px]">WinFormsApp4</span>
        <ChevronDown className="ml-[10px] w-[26px] h-[26px]" color="#c2c4ca" strokeWidth={1.5} />
        <span className="ml-[55px]">Version Control</span>
        <ChevronDown className="ml-[8px] w-[26px] h-[26px]" color="#c2c4ca" strokeWidth={1.5} />
        <div className="flex-1" />
        <HammerIcon className="w-[36px] h-[36px]" />
        <span className="ml-[24px] w-[2px] h-[38px] bg-[#3c3f44]" />
        <ChevronDown className="ml-[12px] w-[26px] h-[26px]" color="#b4b7bd" strokeWidth={1.5} />
        <svg viewBox="0 0 30 24" className="ml-[56px] w-[30px] h-[24px]" fill="none" stroke="#c2c4ca" strokeWidth="2.5">
          <path d="M2 21C5 10 9 3 11 4s-2 14 1 16 6-15 9-16-3 15 0 16 6-10 8-17" />
        </svg>
        <span className="ml-[12px]">EFCoreTestApp</span>
        <ChevronDown className="ml-[11px] w-[26px] h-[26px]" color="#c2c4ca" strokeWidth={1.5} />
        <Play className="ml-[31px] w-[38px] h-[38px]" color="#5fad65" strokeWidth={2} />
        <svg viewBox="0 0 32 32" className="ml-[28px] w-[36px] h-[36px]" fill="none" stroke="#5fad65" strokeWidth="2.2">
          <rect x="9" y="9" width="14" height="19" rx="7" />
          <path d="M11 9a5 5 0 0 1 10 0M3 4l6 6M29 4l-6 6M2 17h7M30 17h-7M4 30l6-6M28 30l-6-6" />
        </svg>
        <EllipsisVertical className="ml-[35px] w-[36px] h-[36px]" color="#b4b7bd" strokeWidth={2} />
        <svg viewBox="0 0 32 32" className="ml-[138px] w-[36px] h-[36px]" fill="none" stroke="#c2c4ca" strokeWidth="2.4">
          <path d="M16 30C8 30 2 24 2 16 2 8 8 2 17 2c6 0 11 3 13 7" />
          <path d="M24 26a10 10 0 0 1-15-8c0-6 4-10 10-10 4 0 6 3 6 6 0 4-3 6-6 6s-4-2-4-4 2-3 3-2" />
        </svg>
        <Search className="ml-[40px] w-[38px] h-[38px]" color="#c2c4ca" strokeWidth={1.6} />
        <Settings className="ml-[44px] mr-[19px] w-[38px] h-[38px]" color="#c2c4ca" strokeWidth={1.5} />
      </div>
      {/* main */}
      <div className="h-[1839px] flex shrink-0">
        <LeftStripe />
        <div className="w-[535px] h-full rounded-[24px] bg-[#191a1c] text-[#dfe1e5]">
          <div className="h-[82px] flex items-center pl-[24px] gap-[8px]">
            <span className="tracking-[0.9px]">Solution</span>
            <ChevronDown className="w-[26px] h-[26px]" color="#b4b7bd" strokeWidth={1.5} />
          </div>
          <div className="h-[10px]" />
          <ProjectTree />
        </div>
        <div className="w-[11px]" />
        <EditorPanel />
        <div className="w-[11px]" />
        <div className="w-[603px] h-full flex flex-col gap-[11px]">
          <div className="h-[960px] bg-[#191a1c] rounded-[24px] relative">
            <div className="h-[82px] flex items-center pl-[25px] tracking-[1.1px]">Notifications</div>
            <div className="h-[262px]" />
            <div className="text-center text-[#6f737a] leading-[46px]">
              Suggestions, events,
              <br />
              and errors will appear here
            </div>
          </div>
          <ToolboxPanel />
        </div>
        <div className="flex-1 flex flex-col items-center pl-[11px] pr-[8px] pt-[6px]">
          <div className="w-[60px] h-[60px] rounded-[12px] bg-[#43454a] flex items-center justify-center">
            <Bell className="w-[38px] h-[38px]" color="#ced0d6" strokeWidth={1.5} />
          </div>
          <div className="w-[48px] h-[2px] bg-[#43454a] my-[20px]" />
          <div className="w-[60px] h-[60px] rounded-[12px] bg-[#43454a] flex items-center justify-center">
            <svg viewBox="0 0 32 32" className="w-[38px] h-[38px]" fill="none" stroke="#ced0d6" strokeWidth="2">
              <path d="M9 12V5c0-2 2-3 4-3h6c2 0 4 1 4 3v7M5 13h22" />
              <path d="M9 14c0 5 3 8 7 8s7-3 7-8" />
              <path d="M12 22l-8 9M20 22l8 9" />
            </svg>
          </div>
        </div>
      </div>
      {/* breadcrumb bar */}
      <div className="flex-1 flex items-center pl-[28px] text-[#9da0a8]">
        <span>WinFormsApp4</span>
        <ChevronRight className="ml-[11px] w-[26px] h-[26px]" color="#9da0a8" strokeWidth={1.5} />
        <span className="ml-[11px]">WinFormsApp4</span>
        <ChevronRight className="ml-[11px] w-[26px] h-[26px]" color="#9da0a8" strokeWidth={1.5} />
        <span className="ml-[16px]">
          <ReportIcon className="w-[30px] h-[30px]" />
        </span>
        <span className="ml-[9px]">Report.cs</span>
        <div className="flex-1" />
        <svg viewBox="0 0 28 28" className="w-[28px] h-[28px]" fill="none" stroke="#b4b7bd" strokeWidth="2">
          <circle cx="14" cy="14" r="12" />
          <path d="M8 14l4 5 8-10" />
        </svg>
        <svg viewBox="0 0 20 28" className="ml-[41px] w-[20px] h-[28px]" fill="none" stroke="#b4b7bd" strokeWidth="2.5">
          <path d="M6 1l2 13 5-8 2 21M4 20l3-6" />
        </svg>
        <svg viewBox="0 0 28 28" className="ml-[42px] w-[28px] h-[28px]" fill="none" stroke="#b4b7bd" strokeWidth="2">
          <rect x="2" y="13" width="16" height="14" rx="3" />
          <path d="M10 18v4M17 13V7a4 4 0 0 1 9 0v2" />
        </svg>
        <svg viewBox="0 0 24 28" className="ml-[35px] mr-[38px] w-[24px] h-[28px]" fill="none" stroke="#b4b7bd" strokeWidth="2">
          <path d="M2 3l10-2 10 2v13c0 5-5 8-10 11C7 24 2 21 2 16z" />
          <path d="M8 8h8M8 12h8M8 16h6M9 20h4" />
        </svg>
      </div>
    </div>
  )
}
